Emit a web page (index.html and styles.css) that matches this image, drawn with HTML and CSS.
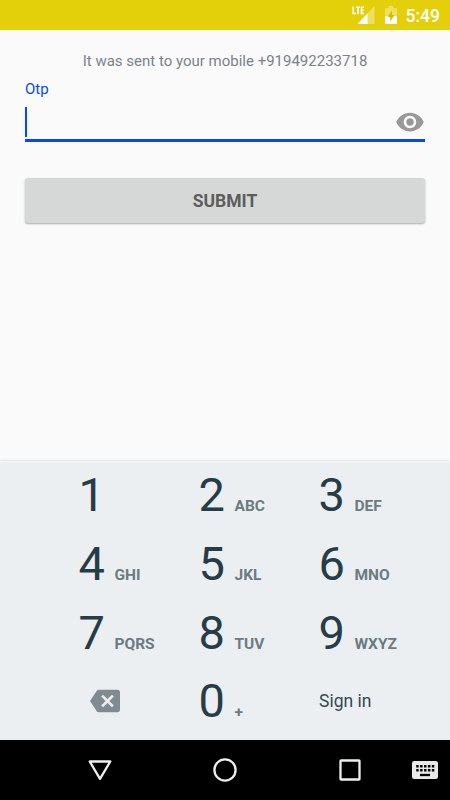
FILE: index.html
```html
<!DOCTYPE html>
<html lang="en">
<head>
<meta charset="utf-8">
<title>Enter OTP</title>
<link rel="stylesheet" href="styles.css">
</head>
<body>
<div class="screen">
  <header class="status">
    <svg class="signal" width="24" height="20" viewBox="0 0 24 20">
      <path d="M22.500 1V19H5.500z" fill="#fff" fill-opacity=".35"/>
      <path d="M15.500 8.400V19H5.500z" fill="#fff"/>
      <rect width="13" height="9.500" fill="#e3d00b"/>
      <path d="M1.200 1.500V8.500H4M4.200 2.200H8M6.100 2V9.200M12 2.200H9.500V8.500H12M9.500 5.300H11.700" fill="none" stroke="#fff" stroke-width="1.600"/>
    </svg>
    <svg class="battery" width="12" height="18" viewBox="0 0 12 18">
      <path d="M1 2H3.500V0H8.500V2H11Q12 2 12 3V17Q12 18 11 18H1Q0 18 0 17V3Q0 2 1 2z" fill="#fff" fill-opacity=".35"/>
      <path d="M0 10H12V17Q12 18 11 18H1Q0 18 0 17z" fill="#fff"/>
      <path d="M7 4.500L2.500 11H5.200V15.500L9.500 9H7z" fill="#d4bf00"/>
    </svg>
    <span class="clock">5:49</span>
  </header>
  <main class="content">
    <p class="hint">It was sent to your mobile +919492233718</p>
    <div class="label">Otp</div>
    <div class="field">
      <span class="caret"></span>
      <svg class="eye" width="30" height="30" viewBox="0 0 24 24" fill="#999"><path d="M12 4.500C7 4.500 2.730 7.610 1 12c1.730 4.390 6 7.500 11 7.500s9.270-3.110 11-7.500c-1.730-4.390-6-7.500-11-7.500zM12 17c-2.760 0-5-2.240-5-5s2.240-5 5-5 5 2.240 5 5-2.240 5-5 5zm0-8c-1.660 0-3 1.340-3 3s1.340 3 3 3 3-1.340 3-3-1.340-3-3-3z"/></svg>
    </div>
    <button class="submit">SUBMIT</button>
  </main>
  <section class="keypad">
    <div class="key"><span class="digit">1</span></div>
    <div class="key"><span class="digit">2</span><span class="letters">ABC</span></div>
    <div class="key"><span class="digit">3</span><span class="letters">DEF</span></div>
    <div class="key"><span class="digit">4</span><span class="letters">GHI</span></div>
    <div class="key"><span class="digit">5</span><span class="letters">JKL</span></div>
    <div class="key"><span class="digit">6</span><span class="letters">MNO</span></div>
    <div class="key"><span class="digit">7</span><span class="letters">PQRS</span></div>
    <div class="key"><span class="digit">8</span><span class="letters">TUV</span></div>
    <div class="key"><span class="digit">9</span><span class="letters">WXYZ</span></div>
    <div class="key erase"><svg width="30" height="30" viewBox="0 0 24 24"><path d="M22 3H7c-.69 0-1.230.350-1.590.880L0 12l5.410 8.110c.360.530.900.890 1.590.890h15c1.100 0 2-.9 2-2V5c0-1.100-.9-2-2-2z" fill="#7f8b90"/><path d="M9.700 7.700L18.300 16.300M18.300 7.700L9.700 16.300" stroke="#ebeff2" stroke-width="2.200"/></svg></div>
    <div class="key"><span class="digit">0</span><span class="letters">+</span></div>
    <div class="key signin">Sign in</div>
  </section>
  <nav class="navbar">
    <svg width="26" height="26" viewBox="0 0 26 26"><path d="M2.700 4.500H23.300L13 21.800z" fill="none" stroke="#eee" stroke-width="2.300" stroke-linejoin="round"/></svg>
    <svg width="26" height="26" viewBox="0 0 26 26"><circle cx="13" cy="13" r="10.600" fill="none" stroke="#eee" stroke-width="2.300"/></svg>
    <svg width="26" height="26" viewBox="0 0 26 26"><rect x="3.500" y="3.500" width="19" height="19" rx=".6" fill="none" stroke="#eee" stroke-width="2.300"/></svg>
    <svg class="keyboard" width="26" height="18" viewBox="0 0 26 18"><rect width="26" height="18" rx="2.300" fill="#e8eaea"/><path d="M4.200 5.200H22.500M4.200 9.300H22.500" stroke="#000" stroke-width="2.400" stroke-dasharray="2.500 1.400"/><path d="M8 14H18" stroke="#000" stroke-width="2.300"/></svg>
  </nav>
</div>
</body>
</html>
```

FILE: styles.css
```css
* { box-sizing: border-box; }
body { margin: 0; font-family: Roboto, "Liberation Sans", sans-serif; }
.screen {
  width: 450px;
  height: 800px;
  display: flex;
  flex-direction: column;
  background: #fafafa;
  overflow: hidden;
}
.status {
  height: 30px;
  flex: none;
  display: flex;
  align-items: center;
  justify-content: flex-end;
  padding-right: 10px;
  background: #e3d00b;
}
.battery { margin: 0 9px 0 9px; }
.clock { font-size: 17.5px; font-weight: 500; line-height: 30px; color: #fff; padding-top: 2px; }
.content { height: 431px; flex: none; padding: 20px 25px 0; }
.hint { margin: 0; font-size: 15px; line-height: 22px; text-align: center; color: #7b828a; }
.label { margin-top: 7px; font-size: 15px; line-height: 20px; color: #0548fb; }
.field {
  height: 43px;
  display: flex;
  justify-content: space-between;
  align-items: flex-start;
  padding-top: 8px;
  border-bottom: 3px solid #0548fb;
}
.caret { width: 2px; height: 30px; background: #0548fb; }
.submit {
  display: block;
  width: 100%;
  height: 45px;
  margin-top: 36px;
  padding: 0;
  border: 0;
  border-radius: 3px;
  background: #d6d8d7;
  box-shadow: 0 1px 2px rgba(0, 0, 0, .32);
  font: 700 17.5px/47px Roboto, sans-serif;
  color: #5c5d5d;
}
.keypad {
  height: 279px;
  flex: none;
  display: grid;
  grid-template-columns: repeat(3, 120px);
  grid-auto-rows: 68.75px;
  padding: 0 12px 0 78px;
  border-top: 1px solid #f6f7f7;
  background: #ebeff2;
  box-shadow: 0 -1px 2px rgba(0, 0, 0, .1);
}
.key { display: flex; align-items: baseline; line-height: 65.5px; }
.digit { width: 36.500px; font-size: 47px; color: #263c46; text-indent: .5px; }
.letters { font-size: 15.5px; font-weight: 700; color: #6c7b81; }
.erase { align-items: center; padding: 0 0 4px 12px; }
.signin { font-size: 17.5px; line-height: 67.5px; color: #37474f; padding-left: 1px; }
.navbar {
  height: 60px;
  flex: none;
  display: grid;
  grid-template-columns: 126px 124px 126px 24px;
  align-items: center;
  padding-left: 37px;
  justify-items: center;
  background: #000;
}
```
